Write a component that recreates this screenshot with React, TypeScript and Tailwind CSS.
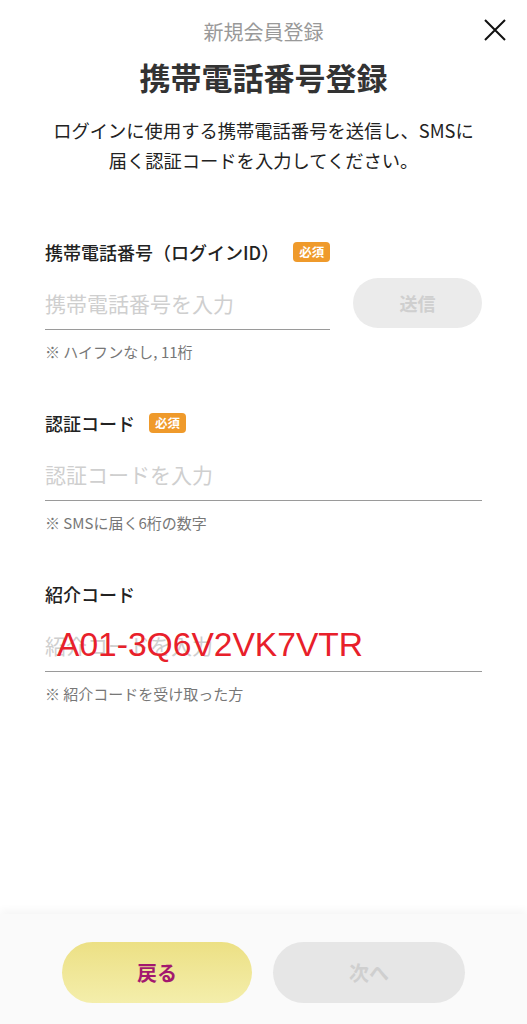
import React from "react"

const font = "font-['Noto_Sans_CJK_JP','Noto_Sans',sans-serif]"

function Badge() {
  return (
    <span className="ml-[14px] inline-flex h-[20px] items-center rounded-[4px] bg-[#ef9a2b] px-[6px] text-[12.5px] font-bold leading-none text-white">
      必須
    </span>
  )
}

function Label({ text, required }: { text: string; required?: boolean }) {
  return (
    <div className="flex h-[26px] items-center">
      <span className="text-[18px] font-medium leading-none text-[#222]">{text}</span>
      {required && <Badge />}
    </div>
  )
}

function Field({
  placeholder,
  hint,
  children,
}: {
  placeholder: string
  hint: string
  children?: React.ReactNode
}) {
  return (
    <div>
      <div className="relative flex h-[65px] items-end border-b-[1.5px] border-[#9a9a9a] pb-[14px]">
        <span className="text-[21px] leading-[24px] text-[#cfcfcf]">{placeholder}</span>
        {children}
      </div>
      <p className="mt-[14px] text-[15px] leading-none text-[#777]">{hint}</p>
    </div>
  )
}

export default function App() {
  return (
    <div className={`${font} relative flex h-[1024px] w-[527px] flex-col overflow-hidden bg-white`}>
      <header className="relative pt-[20px] text-center">
        <p className="text-[20px] leading-[24px] text-[#999]">新規会員登録</p>
        <button className="absolute right-[20px] top-[19px] h-[24px] w-[24px]">
          <svg viewBox="0 0 24 24" className="h-[24px] w-[24px]" stroke="#111" strokeWidth="2" fill="none">
            <path d="M2 1 L22 21 M22 1 L2 21" />
          </svg>
        </button>
        <h1 className="mt-[13px] text-[31px] font-bold leading-[40px] text-[#333]">携帯電話番号登録</h1>
        <p className="mt-[18px] text-[18.3px] leading-[30px] text-[#222]">
          ログインに使用する携帯電話番号を送信し、SMSに
          <br />
          届く認証コードを入力してください。
        </p>
      </header>

      <main className="flex flex-col gap-[51px] px-[45px] pt-[64px]">
        <section>
          <Label text="携帯電話番号（ログインID）" required />
          <div className="flex items-start gap-[23px]">
            <div className="w-[285px]">
              <Field placeholder="携帯電話番号を入力" hint="※ ハイフンなし, 11桁" />
            </div>
            <button className="mt-[13px] h-[50px] flex-1 rounded-full bg-[#ebebeb] text-[18px] font-bold text-[#cfcfcf]">
              送信
            </button>
          </div>
        </section>

        <section>
          <Label text="認証コード" required />
          <Field placeholder="認証コードを入力" hint="※ SMSに届く6桁の数字" />
        </section>

        <section>
          <Label text="紹介コード" />
          <Field placeholder="紹介コードを入力" hint="※ 紹介コードを受け取った方">
            <span className="absolute left-[12px] top-[18px] font-['Liberation_Sans',sans-serif] text-[33.6px] leading-[40px] text-[#e8202a]">
              A01-3Q6V2VK7VTR
            </span>
          </Field>
        </section>
      </main>

      <footer className="mt-auto flex h-[110px] items-start justify-center gap-[21px] bg-[#fafafa] pt-[28px] shadow-[0_-4px_8px_rgba(0,0,0,0.04)]">
        <button className="h-[61px] w-[190px] rounded-full bg-gradient-to-b from-[#ece084] to-[#f4eeab] text-[20px] font-bold text-[#a3186f]">
          戻る
        </button>
        <button className="h-[61px] w-[192px] rounded-full bg-[#e6e6e6] text-[20px] font-bold text-[#cfcfcf]">
          次へ
        </button>
      </footer>
    </div>
  )
}
